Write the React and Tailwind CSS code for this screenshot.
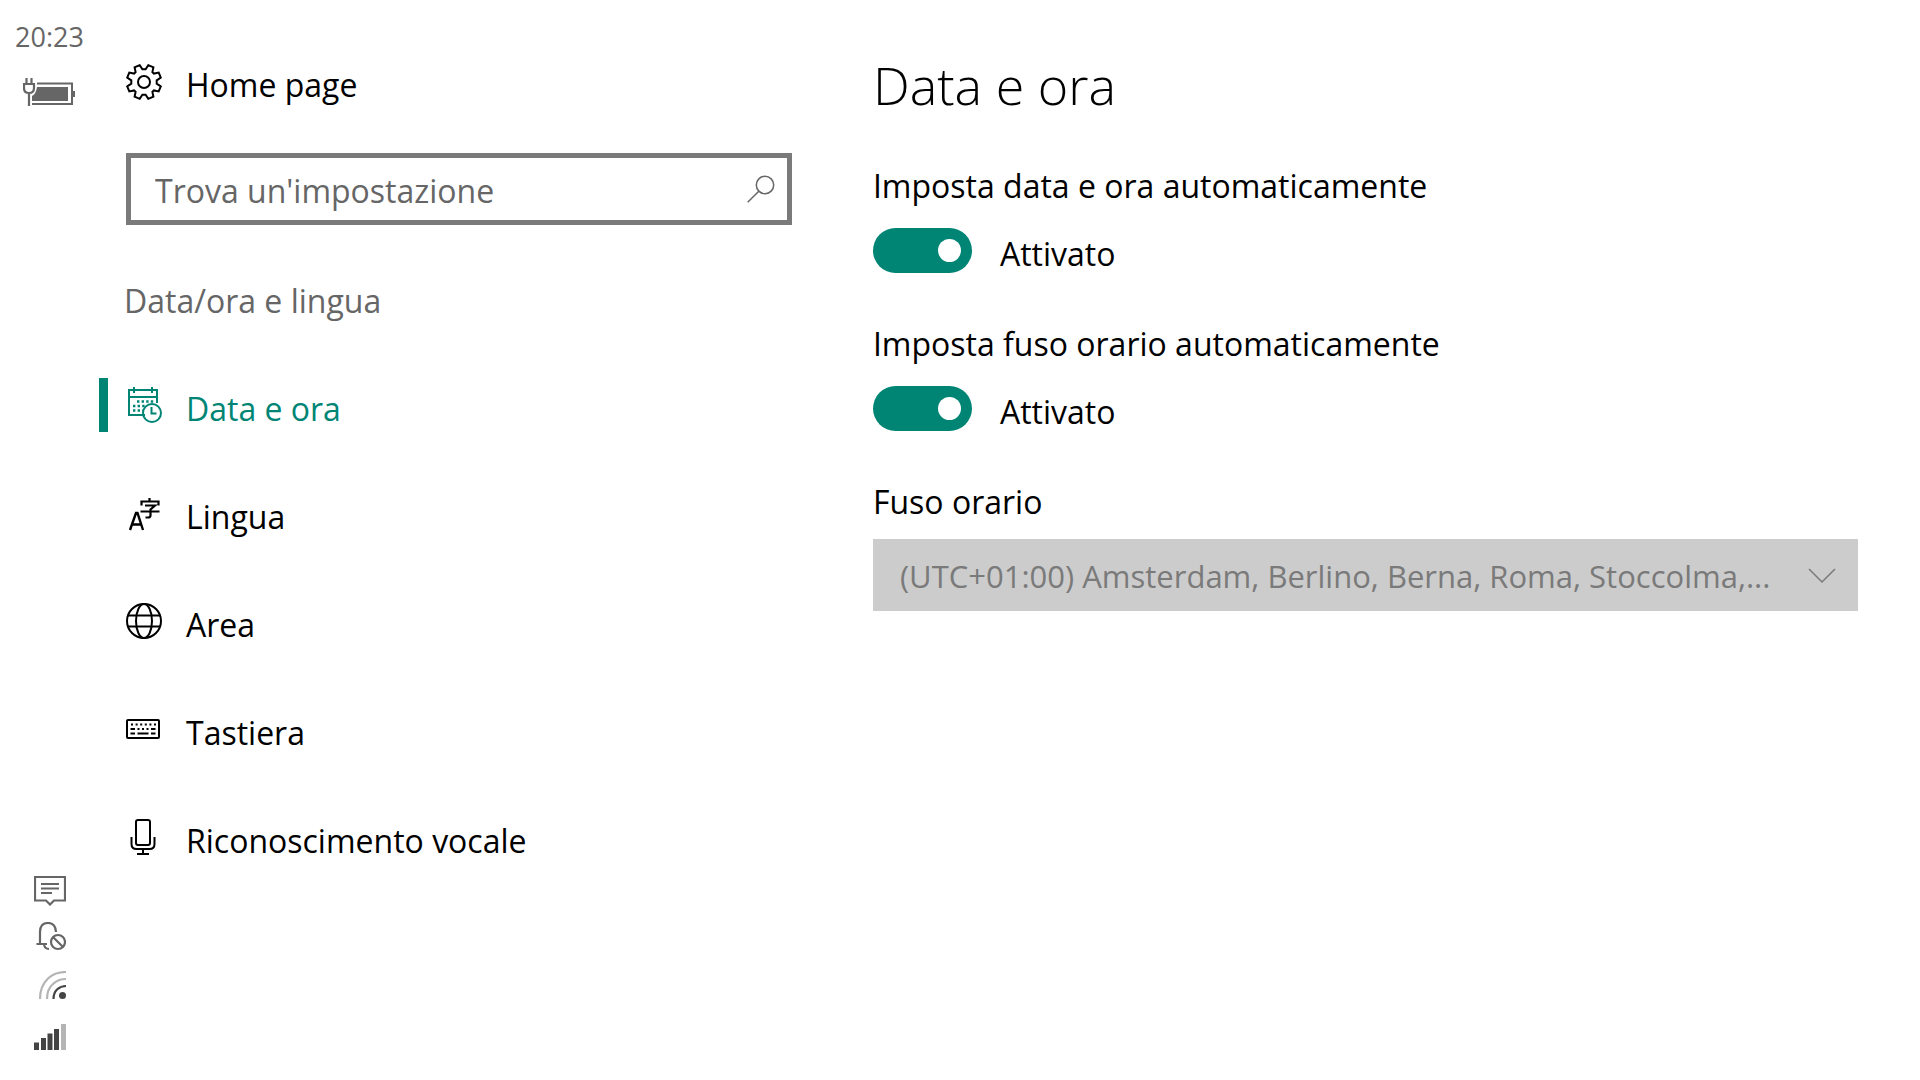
import React, { useState } from 'react';

const GearIcon = () => (
  <svg className="w-9 h-9" viewBox="0 0 36 36" fill="none" stroke="currentColor" strokeWidth="2" aria-hidden="true">
    <path d="M13.7 1.2L8.6 3.3L9.6 8.1L8.1 9.6L3.3 8.6L1.2 13.7L5.3 16.4V19.6L1.2 22.3L3.3 27.4L8.1 26.4L9.6 27.9L8.6 32.7L13.7 34.8L16.4 30.7H19.6L22.3 34.8L27.4 32.7L26.4 27.9L27.9 26.4L32.7 27.4L34.8 22.3L30.7 19.6V16.4L34.8 13.7L32.7 8.6L27.9 9.6L26.4 8.1L27.4 3.3L22.3 1.2L19.6 5.3H16.4Z" />
    <circle cx="18" cy="18" r="6" />
  </svg>
);

const CalendarIcon = () => (
  <svg className="w-9 h-9" viewBox="0 0 36 36" fill="none" stroke="currentColor" strokeWidth="2" aria-hidden="true">
    <path d="M19 28H3V3H31V16" />
    <path d="M3 10H31M8 0V6M26 0V6" />
    <path d="M11 14.5H28M7 19H20M7 23.5H17" strokeWidth="2.4" strokeDasharray="2.4 2.2" />
    <circle cx="26" cy="26" r="9" />
    <path d="M25.5 20V26.5H30.5" />
  </svg>
);

const LanguageIcon = () => (
  <svg className="w-9 h-9" viewBox="0 0 36 36" fill="none" stroke="currentColor" strokeWidth="2.2" aria-hidden="true">
    <path d="M4 35L10 18H11.5L17 35M6 29.5H15" strokeWidth="2.4" />
    <path d="M23.5 3V6.5M15.5 10.5V6.5H32.5V10.5M19 10.5H29L24.5 14.5V20.5Q24.5 22.5 22 22.5H19.5M14.5 16.5H33.5" />
  </svg>
);

const GlobeIcon = () => (
  <svg className="w-9 h-9" viewBox="0 0 36 36" fill="none" stroke="currentColor" strokeWidth="2" aria-hidden="true">
    <circle cx="18" cy="18" r="17" />
    <ellipse cx="18" cy="18" rx="8" ry="17" />
    <path d="M2 12.5H34M2 23.5H34" />
  </svg>
);

const KeyboardIcon = () => (
  <svg className="w-9 h-9" viewBox="0 0 36 36" fill="none" stroke="currentColor" strokeWidth="2" aria-hidden="true">
    <rect x="1" y="9" width="32" height="18" rx="1" />
    <path d="M5 13.5H31" strokeDasharray="2 2.6" />
    <path d="M4.5 18H9M11.5 18H13.5M16 18H18M20.5 18H22.5M25 18H29.5M4.5 22.5H9M11.5 22.5H22.5M25 22.5H29.5" />
  </svg>
);

const MicIcon = () => (
  <svg className="w-9 h-9" viewBox="0 0 36 36" fill="none" stroke="currentColor" strokeWidth="2" aria-hidden="true">
    <rect x="10" y="1" width="14" height="25" rx="2" />
    <path d="M5.5 18V25Q5.5 30 10.5 30H23.5Q28.5 30 28.5 25V18M17 30V35M11 35H23" />
  </svg>
);

const SearchIcon = () => (
  <svg className="w-7 h-7" viewBox="0 0 28 28" fill="none" stroke="currentColor" strokeWidth="1.5" aria-hidden="true">
    <circle cx="18" cy="10" r="8.7" />
    <path d="M11.8 16.2L0.7 27.3" />
  </svg>
);

const ChevronIcon = () => (
  <svg className="w-7 h-7" viewBox="0 0 28 28" fill="none" stroke="currentColor" strokeWidth="1.5" aria-hidden="true">
    <path d="M1 8L14 21L27 8" />
  </svg>
);

const BatteryIcon = () => (
  <svg className="w-[52px] h-7" viewBox="0 0 52 28" fill="none" stroke="currentColor" strokeWidth="2" aria-hidden="true">
    <path d="M14 5.5H49V26H9" />
    <path d="M50 13H52V19H50Z" fill="currentColor" stroke="none" />
    <path d="M14 9H45V23H9V18Q13 16 14 9Z" fill="currentColor" stroke="none" />
    <path d="M1 6H11V10Q11 15 6 15Q1 15 1 10ZM3.5 0V6M8.5 0V6M6 15V28" strokeWidth="2.2" />
  </svg>
);

const MessageIcon = () => (
  <svg className="w-8 h-[30px]" viewBox="0 0 32 30" fill="none" stroke="currentColor" strokeWidth="2.2" aria-hidden="true">
    <path d="M1 1H31V24.5H20L16 28.5L12 24.5H1Z" />
    <path d="M7 8H25M7 12.5H25M7 17H18" />
  </svg>
);

const QuietIcon = () => (
  <svg className="w-8 h-[33px]" viewBox="0 0 32 33" fill="none" stroke="currentColor" strokeWidth="2.2" aria-hidden="true">
    <path d="M22 10Q21.5 1 14 1Q6 1 6 10V22M2.5 22H13M10 22Q10.5 27 15 27" />
    <circle cx="24" cy="20" r="7" />
    <path d="M19 15L29 25" />
  </svg>
);

const WifiIcon = () => (
  <svg className="w-8 h-[37px]" viewBox="0 0 32 37" fill="none" strokeWidth="2.2" aria-hidden="true">
    <path d="M6 28Q6 15 14 7.5Q21 1 32 1" stroke="#b4b4b4" />
    <path d="M13 28Q13 18 19 13Q24 8 32 8" stroke="#b4b4b4" />
    <path d="M19.5 28Q19.5 22 23 18.5Q27 15 32 15" stroke="#444444" />
    <circle cx="28.5" cy="24.5" r="3.5" fill="#444444" />
  </svg>
);

const SignalIcon = () => (
  <svg className="w-8 h-[26px]" viewBox="0 0 32 26" fill="#444444" aria-hidden="true">
    <path d="M0 18.5H5V26H0ZM7 14H12V26H7ZM13.5 9.5H18.5V26H13.5ZM20 5H25V26H20Z" />
    <path d="M27 0H32V26H27Z" fill="#b4b4b4" />
  </svg>
);

const navItems = [
  { id: 'date', label: 'Data e ora', icon: CalendarIcon },
  { id: 'language', label: 'Lingua', icon: LanguageIcon },
  { id: 'region', label: 'Area', icon: GlobeIcon },
  { id: 'keyboard', label: 'Tastiera', icon: KeyboardIcon },
  { id: 'speech', label: 'Riconoscimento vocale', icon: MicIcon },
];

const StatusRail = () => (
  <div className="flex flex-col items-center justify-between w-[99px] shrink-0 pt-[19px] pb-[30px] text-[#666666]">
    <div className="flex flex-col items-center gap-[23px]">
      <time className="text-[27px] leading-9">20:23</time>
      <BatteryIcon />
    </div>
    <div className="flex flex-col items-center gap-4">
      <MessageIcon />
      <QuietIcon />
      <WifiIcon />
      <SignalIcon />
    </div>
  </div>
);

const ToggleSetting = ({ id, label }) => {
  const [enabled, setEnabled] = useState(true);

  return (
    <div className="flex flex-col gap-[19px]">
      <label htmlFor={id} className="leading-[46px]">{label}</label>
      <div className="flex items-start gap-7">
        <button
          id={id}
          type="button"
          role="switch"
          aria-checked={enabled}
          onClick={() => setEnabled(!enabled)}
          className={`flex items-center w-[99px] h-[45px] px-[11px] rounded-full ${enabled ? 'justify-end bg-[#008575]' : 'justify-start bg-[#999999]'}`}
        >
          <span className="w-[23px] h-[23px] rounded-full bg-white" />
        </button>
        <span className="leading-[52px]">{enabled ? 'Attivato' : 'Disattivato'}</span>
      </div>
    </div>
  );
};

const App = () => {
  const [active, setActive] = useState('date');

  return (
    <div className="flex min-h-screen bg-white text-black text-[32px] font-['Open_Sans',sans-serif]">
      <StatusRail />

      <div className="grid grid-cols-[17fr_23fr] flex-1">
        {/* Navigation */}
        <aside className="pt-[55px] pr-[81px]">
          <a href="#home" className="flex items-center gap-6 h-[54px] pl-[27px]">
            <GearIcon />
            <span className="pt-1.5">Home page</span>
          </a>

          <div className="flex items-center h-[72px] mt-[44px] ml-[27px] pr-3 border-5 border-[#7a7a7a] text-[#666666]">
            <input
              type="text"
              aria-label="Trova un'impostazione"
              placeholder="Trova un'impostazione"
              className="flex-1 min-w-0 pl-6 pt-1 outline-none placeholder:text-[#666666]"
            />
            <SearchIcon />
          </div>

          <h2 className="mt-[53px] pl-[25px] leading-[46px] text-[#666666]">Data/ora e lingua</h2>

          <nav className="flex flex-col gap-[54px] mt-[54px]">
            {navItems.map(({ id, label, icon: Icon }) => (
              <a
                key={id}
                href={`#${id}`}
                onClick={() => setActive(id)}
                className={`flex items-center gap-6 h-[54px] pl-[18px] border-l-9 ${active === id ? 'border-[#008575] text-[#008575]' : 'border-transparent'}`}
              >
                <Icon />
                <span className="pt-2">{label}</span>
              </a>
            ))}
          </nav>
        </aside>

        {/* Settings */}
        <main className="flex flex-col pt-[49px] pr-[62px]">
          <h1 className="text-[52px] leading-[72px] font-light">Data e ora</h1>
          <div className="flex flex-col gap-[41px] mt-[42px]">
            <ToggleSetting id="auto-time" label="Imposta data e ora automaticamente" />
            <ToggleSetting id="auto-zone" label="Imposta fuso orario automaticamente" />
            <div className="flex flex-col gap-[14px]">
              <label htmlFor="timezone" className="leading-[46px]">Fuso orario</label>
              <div className="grid items-center text-[#7a7a7a]">
                <select
                  id="timezone"
                  disabled
                  className="col-start-1 row-start-1 w-full h-[72px] pt-0.5 pl-[27px] pr-[60px] appearance-none truncate text-[31px] bg-[#cccccc] opacity-100"
                >
                  <option>(UTC+01:00) Amsterdam, Berlino, Berna, Roma, Stoccolma,...</option>
                </select>
                <span className="col-start-1 row-start-1 justify-self-end mr-[22px] pointer-events-none">
                  <ChevronIcon />
                </span>
              </div>
            </div>
          </div>
        </main>
      </div>
    </div>
  );
};

export default App;
